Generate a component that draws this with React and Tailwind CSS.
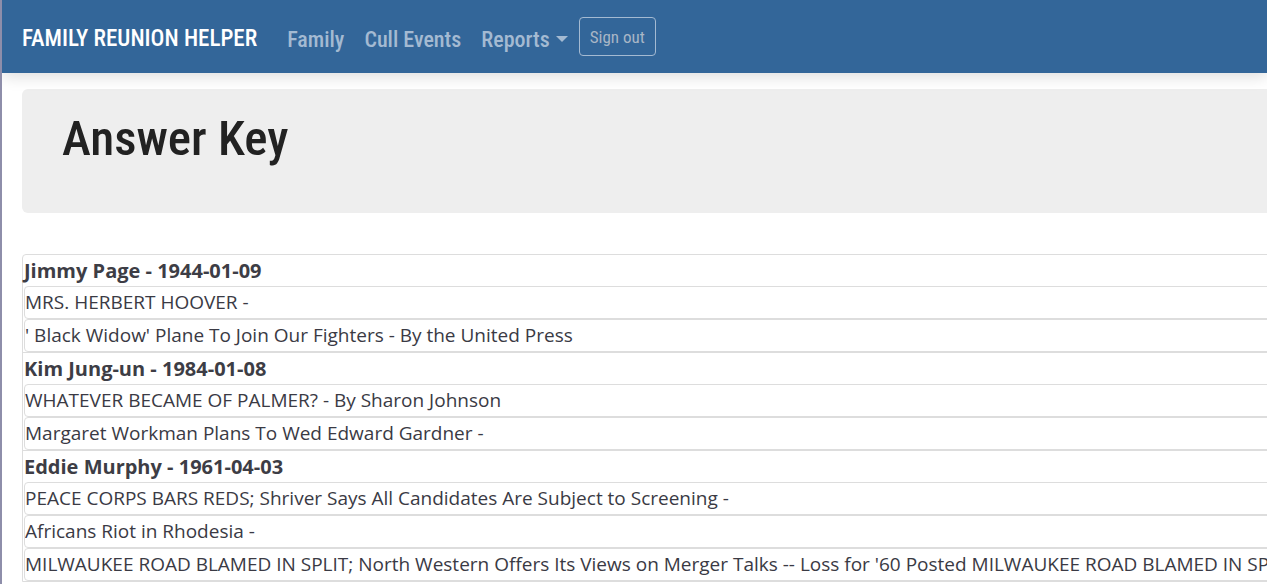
const groups = [
  {
    name: 'Jimmy Page - 1944-01-09',
    items: ['MRS. HERBERT HOOVER -', "' Black Widow' Plane To Join Our Fighters - By the United Press"],
  },
  {
    name: 'Kim Jung-un - 1984-01-08',
    items: ['WHATEVER BECAME OF PALMER? - By Sharon Johnson', 'Margaret Workman Plans To Wed Edward Gardner -'],
  },
  {
    name: 'Eddie Murphy - 1961-04-03',
    items: [
      'PEACE CORPS BARS REDS; Shriver Says All Candidates Are Subject to Screening -',
      'Africans Riot in Rhodesia -',
      "MILWAUKEE ROAD BLAMED IN SPLIT; North Western Offers Its Views on Merger Talks -- Loss for '60 Posted MILWAUKEE ROAD BLAMED IN SPLIT; North Western Offers Its Views on Merger Talks -- Loss for '60 Posted -",
    ],
  },
];

const condensed = "font-['Roboto_Condensed','Roboto',sans-serif]";

const App = () => {
  return (
    <div className="h-[584px] overflow-hidden bg-white border-l-2 border-[#8e8eaa] font-['Open_Sans','Noto_Sans',sans-serif] text-[#333]">
      <nav className={`h-[73px] bg-[#336699] flex items-center pl-[20px] pt-[5px] shadow-[0_4px_14px_rgba(0,0,0,0.13)] relative z-10 ${condensed}`}>
        <span className="text-white text-[23px] font-medium mr-[30px]">FAMILY REUNION HELPER</span>
        <span className="text-[#a4bad2] text-[22px] font-medium mr-[20px]">Family</span>
        <span className="text-[#a4bad2] text-[22px] font-medium mr-[20px]">Cull Events</span>
        <span className="text-[#a4bad2] text-[22px] font-medium flex items-center mr-[11px]">
          Reports
          <svg width="12" height="7" viewBox="0 0 12 7" className="ml-[6px] mt-[1px]">
            <path d="M0 0h12L6 6z" fill="#a4bad2" />
          </svg>
        </span>
        <span className="text-[#a9b6c6] text-[17px] border border-[#a4bad2] rounded-[4px] h-[39px] -mt-[5px] pt-[2px] px-[10px] flex items-center">
          Sign out
        </span>
      </nav>

      <div className="ml-[20px] w-[1300px]">
        <div className="mt-[16px] h-[124px] bg-[#eeeeee] rounded-[6px] pl-[40px] pt-[25px]">
          <h1 className={`text-[49px] font-medium text-[#222] leading-none ${condensed}`}>Answer Key</h1>
        </div>

        <div className="mt-[41px] border border-[#dddddd] rounded-tl-[4px]">
          {groups.map((g, gi) => (
            <div key={gi} className={gi > 0 ? 'border-t border-[#dddddd]' : ''}>
              <div className="h-[31px] leading-[31px] pl-[1px] text-[20px] font-bold text-[#3d3d45]">{g.name}</div>
              <div className="pl-[1px]">
                {g.items.map((it, ii) => (
                  <div
                    key={ii}
                    className="h-[33px] leading-[31px] border border-[#dddddd] rounded-l-[4px] text-[19px] whitespace-nowrap overflow-hidden text-[#3a3a44]"
                  >
                    {it}
                  </div>
                ))}
              </div>
            </div>
          ))}
        </div>
      </div>
    </div>
  );
};

export default App;
